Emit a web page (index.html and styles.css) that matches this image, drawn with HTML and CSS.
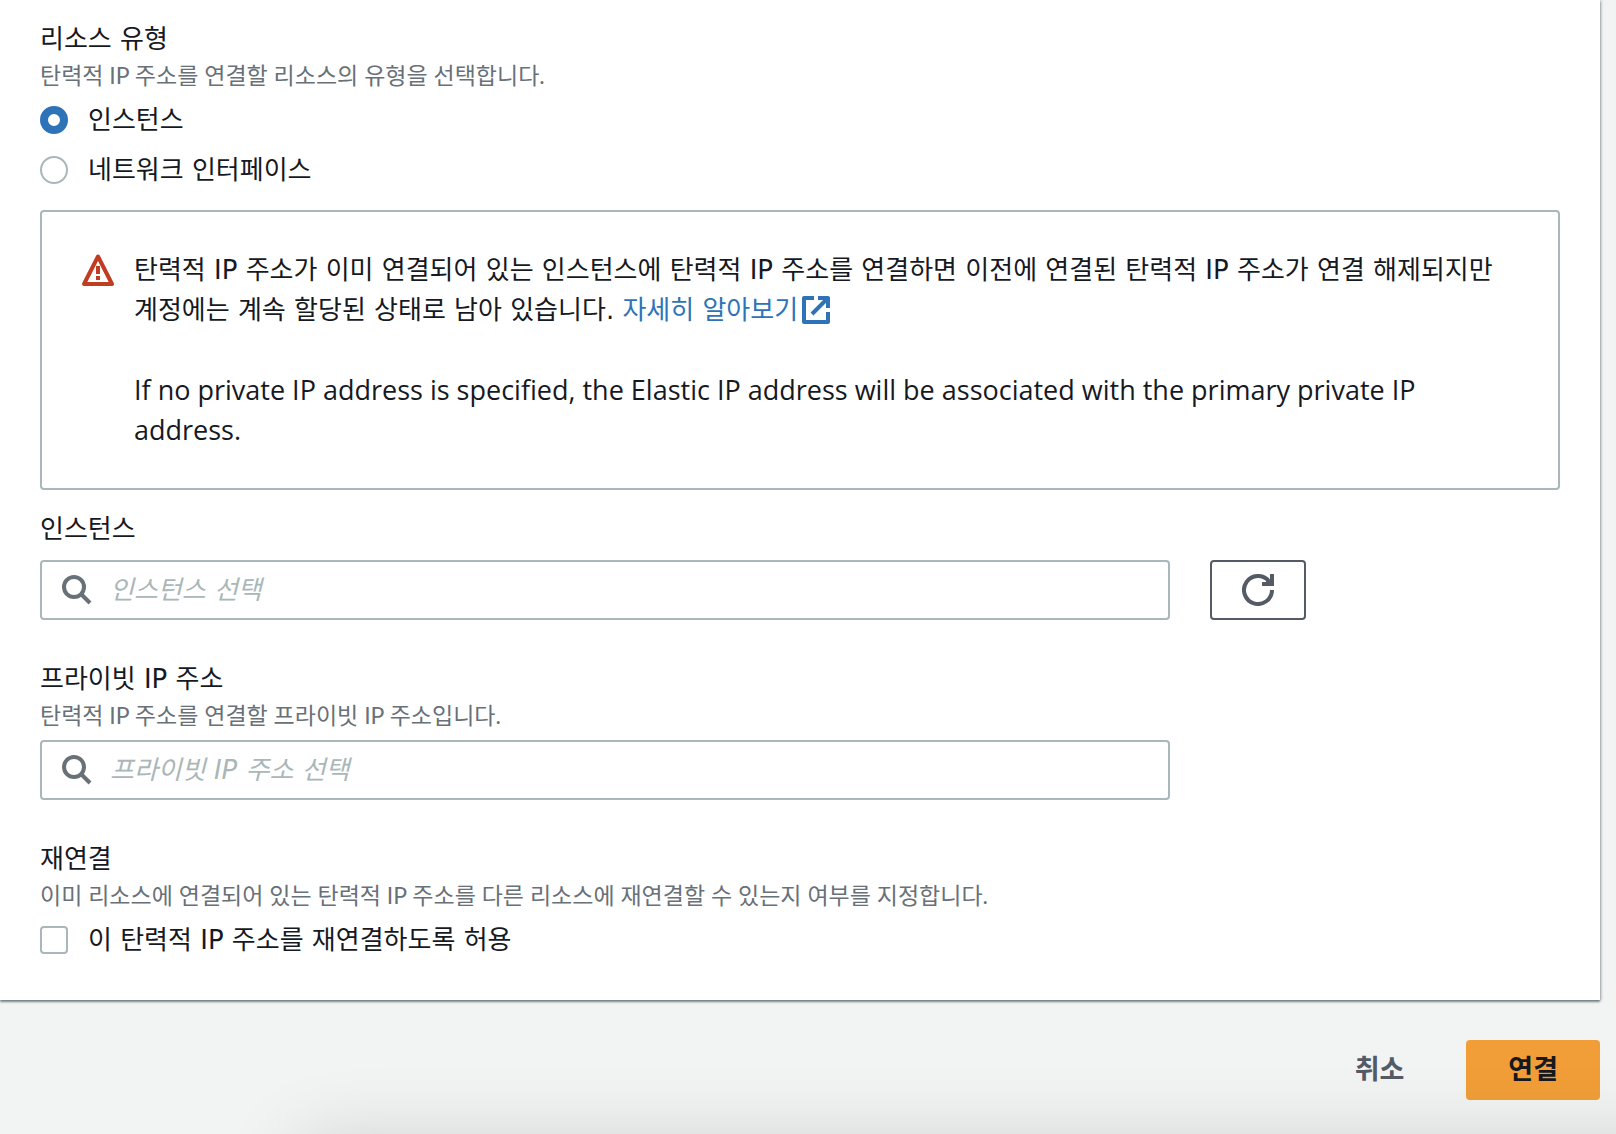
FILE: index.html
```html
<!DOCTYPE html>
<html lang="ko">
<head>
<meta charset="utf-8">
<meta name="viewport" content="width=device-width, initial-scale=1">
<title>탄력적 IP 주소 연결</title>
<link rel="stylesheet" href="styles.css">
</head>
<body>
<form class="page">
  <div class="panel">
    <fieldset class="field" aria-describedby="type-hint">
      <legend class="label">리소스 유형</legend>
      <p class="hint" id="type-hint">탄력적 IP 주소를 연결할 리소스의 유형을 선택합니다.</p>
      <div class="options">
        <label class="option"><input class="radio" type="radio" name="type" checked><span>인스턴스</span></label>
        <label class="option"><input class="radio" type="radio" name="type"><span>네트워크 인터페이스</span></label>
      </div>
    </fieldset>

    <div class="alert">
      <svg class="alert-icon" viewBox="0 0 32 32" aria-hidden="true">
        <path d="M16 2.500 L30 30 H2 Z" fill="none" stroke="currentColor" stroke-width="4" stroke-linejoin="round"/>
        <path d="M14 12h4v8h-4zM14 22h4v4h-4z" fill="currentColor"/>
      </svg>
      <div class="alert-body">
        <p>탄력적 IP 주소가 이미 연결되어 있는 인스턴스에 탄력적 IP 주소를 연결하면 이전에 연결된 탄력적 IP 주소가 연결 해제되지만 계정에는 계속 할당된 상태로 남아 있습니다. <a class="link" href="#">자세히 알아보기<svg class="link-icon" viewBox="0 0 28 28" aria-hidden="true"><path d="M12 2H2v24h24V16M16 2h10v10M25 3 10 18" fill="none" stroke="currentColor" stroke-width="4" stroke-linejoin="round"/></svg></a></p>
        <p class="english" lang="en">If no private IP address is specified, the Elastic IP address will be associated with the primary private IP address.</p>
      </div>
    </div>

    <div class="field">
      <label class="label label-spaced" for="instance">인스턴스</label>
      <div class="row">
        <div class="search">
          <svg class="search-icon" viewBox="0 0 30 30" aria-hidden="true"><circle cx="12" cy="12" r="10" fill="none" stroke="currentColor" stroke-width="4"/><path d="M19 19l9 9" stroke="currentColor" stroke-width="4"/></svg>
          <input class="search-input" id="instance" type="text" placeholder="인스턴스 선택">
        </div>
        <button class="refresh" type="button" aria-label="새로 고침">
          <svg class="refresh-icon" viewBox="0 0 32 32" aria-hidden="true"><path d="M30 16a14 14 0 1 1-3-8.700" fill="none" stroke="currentColor" stroke-width="4"/><path d="M28 0h4v12H20V8h4l1-4 3 3z" fill="currentColor"/></svg>
        </button>
      </div>
    </div>

    <div class="field">
      <label class="label" for="private-ip">프라이빗 IP 주소</label>
      <p class="hint" id="ip-hint">탄력적 IP 주소를 연결할 프라이빗 IP 주소입니다.</p>
      <div class="row">
        <div class="search">
          <svg class="search-icon" viewBox="0 0 30 30" aria-hidden="true"><circle cx="12" cy="12" r="10" fill="none" stroke="currentColor" stroke-width="4"/><path d="M19 19l9 9" stroke="currentColor" stroke-width="4"/></svg>
          <input class="search-input" id="private-ip" type="text" placeholder="프라이빗 IP 주소 선택" aria-describedby="ip-hint">
        </div>
      </div>
    </div>

    <fieldset class="field" aria-describedby="reassociate-hint">
      <legend class="label">재연결</legend>
      <p class="hint" id="reassociate-hint">이미 리소스에 연결되어 있는 탄력적 IP 주소를 다른 리소스에 재연결할 수 있는지 여부를 지정합니다.</p>
      <label class="option"><input class="checkbox" type="checkbox"><span>이 탄력적 IP 주소를 재연결하도록 허용</span></label>
    </fieldset>
  </div>

  <div class="actions">
    <button class="button button-link" type="button">취소</button>
    <button class="button button-primary" type="submit">연결</button>
  </div>
</form>
<div class="dock-shadow"></div>
</body>
</html>
```

FILE: styles.css
```css
* {
  box-sizing: border-box;
}

body {
  margin: 0;
  min-height: 100vh;
  overflow-x: hidden;
  background: #f2f4f4;
  color: #16191f;
  font: 26px/40px "DejaVu Sans", "Noto Sans CJK KR", sans-serif;
  word-break: keep-all;
}

p {
  margin: 0;
}

input,
button {
  margin: 0;
  font: inherit;
}

.page {
  display: flex;
  flex-direction: column;
}

.panel {
  display: flex;
  flex-direction: column;
  margin-right: 16px;
  padding: 20px 40px 40px;
  background: #fff;
  box-shadow: 0 2px 2px rgba(0, 28, 36, 0.5), 2px 0 2px rgba(0, 28, 36, 0.15);
}

.field {
  min-width: 0;
  margin: 0;
  padding: 0;
  border: 0;
}

.field + .field {
  margin-top: 40px;
}

.label {
  display: block;
  padding: 0;
  line-height: 38px;
}

.label-spaced {
  margin-bottom: 12px;
}

.hint {
  margin-bottom: 8px;
  color: #687078;
  font-family: Lato, "Noto Sans CJK KR", sans-serif;
  font-size: 23px;
  line-height: 34px;
}

.options {
  display: flex;
  flex-direction: column;
  gap: 10px;
}

.option {
  display: flex;
  align-items: center;
  gap: 20px;
}

.radio,
.checkbox {
  flex: none;
  width: 28px;
  height: 28px;
  appearance: none;
  border: 2px solid #aab7b8;
  background: #fff;
}

.radio {
  border-radius: 50%;
}

.radio:checked {
  border: 8px solid #2e73b8;
}

.checkbox {
  border-radius: 4px;
}

.alert {
  display: flex;
  gap: 20px;
  margin: 20px 0;
  padding: 38px 40px;
  border: 2px solid #aab7b8;
  border-radius: 4px;
}

.alert-icon {
  flex: none;
  width: 32px;
  height: 32px;
  margin-top: 4px;
  color: #c13d22;
}

.english {
  margin-top: 40px;
  font-family: "Open Sans", sans-serif;
  font-size: 27px;
  font-weight: 500;
}

.link {
  color: #2e73b8;
  text-decoration: none;
}

.link-icon {
  width: 28px;
  height: 28px;
  margin-left: 4px;
  vertical-align: -5px;
}

.row {
  display: grid;
  grid-template-columns: repeat(12, minmax(0, 1fr));
  column-gap: 40px;
}

.search {
  display: flex;
  grid-column: span 9;
  align-items: center;
  gap: 18px;
  height: 60px;
  padding: 0 20px;
  border: 2px solid #aab7b8;
  border-radius: 4px;
}

.search-icon {
  flex: none;
  width: 30px;
  height: 30px;
  color: #687078;
}

.search-input {
  flex: 1;
  min-width: 0;
  height: 56px;
  padding: 0;
  border: 0;
  outline: 0;
  background: transparent;
  color: #16191f;
}

.search-input::placeholder {
  color: #aab7b8;
  font-style: italic;
  opacity: 1;
}

.refresh {
  display: grid;
  place-items: center;
  width: 96px;
  height: 60px;
  padding: 0;
  border: 2px solid #545b64;
  border-radius: 4px;
  background: #fff;
  color: #545b64;
}

.refresh-icon {
  width: 32px;
  height: 32px;
}

.actions {
  display: flex;
  justify-content: flex-end;
  gap: 20px;
  margin-right: 16px;
  padding: 40px 0 34px;
}

.button {
  height: 60px;
  padding: 0 42px;
  border: 0;
  border-radius: 4px;
  font-size: 27px;
  font-weight: 700;
  line-height: 40px;
}

.button-link {
  background: transparent;
  color: #545b64;
}

.button-primary {
  background: #f19e38;
  color: #16191f;
}

/* Soft shade cast by the window docked under the page */
.dock-shadow {
  position: fixed;
  top: 100%;
  right: -200px;
  left: 300px;
  height: 200px;
  box-shadow: 0 10px 80px rgba(0, 0, 0, 0.16);
  pointer-events: none;
}
```
